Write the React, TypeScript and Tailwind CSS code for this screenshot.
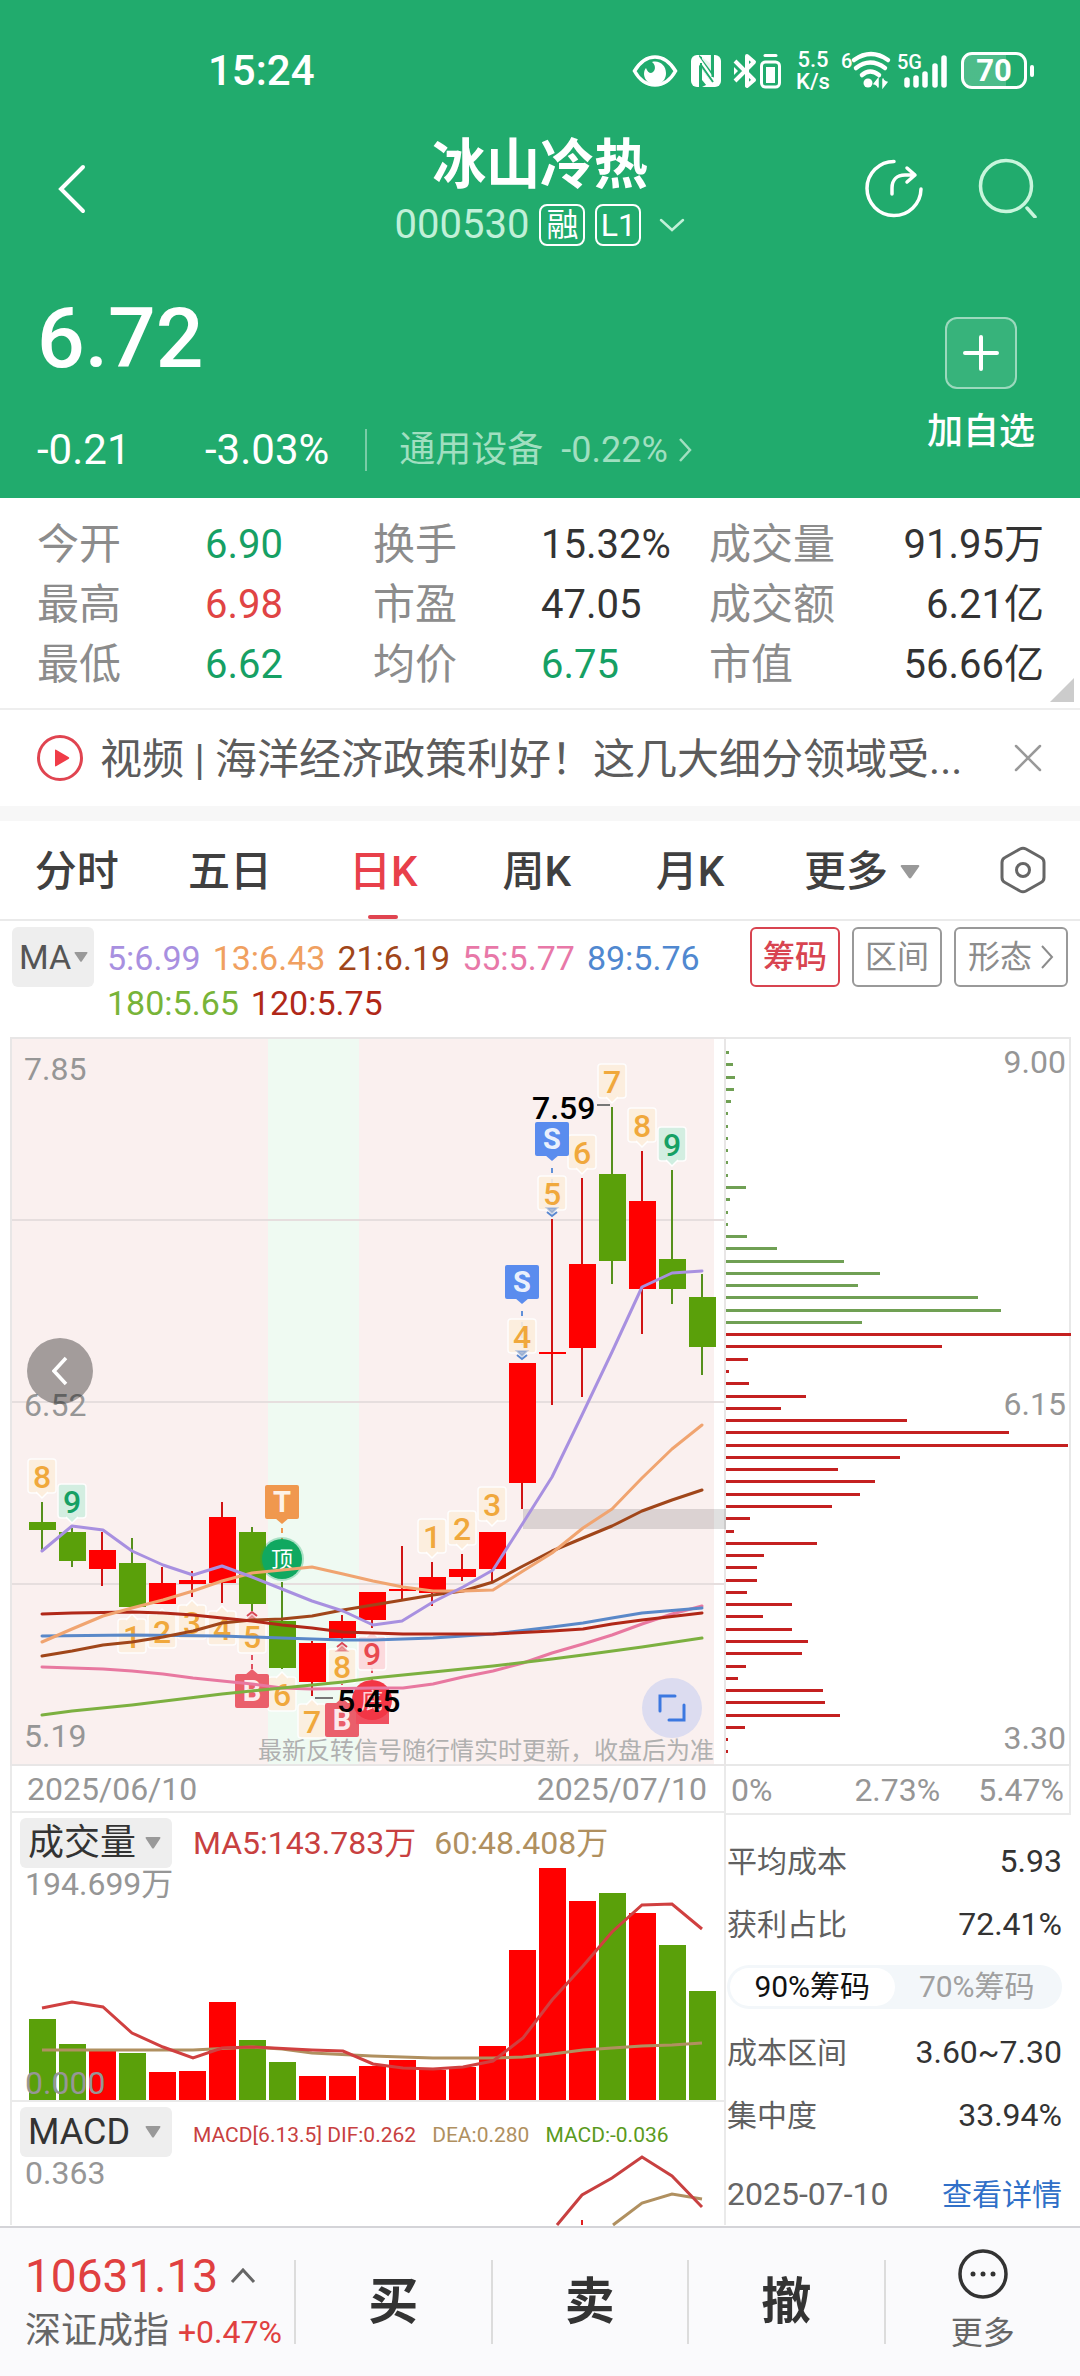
import { useState } from 'react';
import type { ReactNode } from 'react';

const RED = '#ff0000';
const GREEN = '#5aa00a';
const STEP = 30;
const FIRST_X = 42;

const cx = (i: number) => FIRST_X + STEP * i;

type Candle = { up: boolean; high: number; top: number; bottom: number; low: number; vol: number };

// [up, high, body top, body bottom, low, volume bar top]
const rows: [number, number, number, number, number, number][] = [
  [0, 1502, 1522, 1530, 1550, 2019],
  [0, 1528, 1532, 1561, 1567, 2044],
  [1, 1532, 1550, 1569, 1586, 2051],
  [0, 1538, 1563, 1607, 1608, 2053],
  [1, 1567, 1583, 1604, 1604, 2072],
  [1, 1571, 1580, 1584, 1597, 2071],
  [1, 1502, 1517, 1583, 1603, 2002],
  [0, 1527, 1532, 1604, 1611, 2040],
  [0, 1582, 1621, 1668, 1669, 2062],
  [1, 1641, 1643, 1682, 1696, 2076],
  [1, 1615, 1621, 1638, 1639, 2076],
  [1, 1592, 1592, 1620, 1628, 2066],
  [1, 1546, 1589, 1591, 1599, 2060],
  [1, 1562, 1577, 1593, 1606, 2070],
  [1, 1554, 1569, 1577, 1581, 2067],
  [1, 1532, 1532, 1569, 1583, 2046],
  [1, 1363, 1363, 1483, 1509, 1950],
  [1, 1219, 1352, 1354, 1405, 1868],
  [1, 1178, 1264, 1348, 1397, 1901],
  [0, 1107, 1174, 1261, 1284, 1893],
  [1, 1151, 1201, 1289, 1334, 1913],
  [0, 1170, 1259, 1289, 1304, 1945],
  [0, 1274, 1297, 1347, 1375, 1991],
];

const candles: Candle[] = rows.map(([up, high, top, bottom, low, vol]) => ({
  up: up === 1,
  high,
  top,
  bottom,
  low,
  vol,
}));

const maLines = [
  { color: '#e878a0', points: '42,1667 103,1669 132,1671 163,1674 193,1678 222,1681 252,1684 282,1688 312,1689 373,1688 403,1688 433,1684 463,1677 493,1671 523,1663 552,1653 583,1644 612,1635 642,1624 672,1614 702,1606' },
  { color: '#7cb040', points: '42,1715 72,1711 132,1705 222,1694 282,1688 343,1682 373,1678 433,1672 493,1666 552,1659 583,1655 642,1647 702,1638' },
  { color: '#5a88c8', points: '42,1636 132,1635 222,1636 282,1638 343,1640 373,1640 433,1638 493,1634 552,1627 583,1623 612,1618 642,1613 702,1608' },
  { color: '#a0461a', points: '42,1656 72,1651 103,1645 132,1642 163,1637 193,1631 222,1623 252,1620 282,1619 312,1616 343,1610 373,1605 403,1600 433,1595 463,1591 493,1582 523,1566 552,1551 583,1538 612,1526 642,1511 672,1500 702,1490' },
  { color: '#b02818', points: '42,1614 72,1613 132,1612 163,1613 193,1615 222,1618 252,1621 282,1625 312,1628 343,1632 373,1633 403,1634 493,1634 552,1631 583,1629 612,1624 642,1620 702,1613' },
  { color: '#f0a470', points: '42,1642 72,1629 103,1616 132,1608 163,1600 193,1591 222,1581 252,1573 282,1570 312,1567 343,1574 373,1581 403,1587 433,1591 463,1591 493,1590 523,1571 552,1553 583,1528 612,1509 642,1478 672,1449 702,1425' },
  { color: '#a890e0', points: '42,1551 72,1526 103,1530 132,1551 163,1565 193,1575 222,1566 252,1577 282,1589 312,1601 343,1611 373,1625 402,1621 433,1602 463,1587 493,1570 523,1523 552,1477 582,1415 612,1352 642,1287 672,1273 702,1271' },
];

type Tone = 'orange' | 'green' | 'red';
const tags: { i: number; y: number; n: string; down: boolean; tone: Tone }[] = [
  { i: 0, y: 1476, n: '8', down: true, tone: 'orange' },
  { i: 1, y: 1501, n: '9', down: true, tone: 'green' },
  { i: 3, y: 1636, n: '1', down: false, tone: 'orange' },
  { i: 4, y: 1631, n: '2', down: false, tone: 'orange' },
  { i: 5, y: 1622, n: '3', down: false, tone: 'orange' },
  { i: 6, y: 1628, n: '4', down: false, tone: 'orange' },
  { i: 7, y: 1636, n: '5', down: false, tone: 'orange' },
  { i: 8, y: 1694, n: '6', down: false, tone: 'orange' },
  { i: 9, y: 1721, n: '7', down: false, tone: 'orange' },
  { i: 10, y: 1666, n: '8', down: false, tone: 'orange' },
  { i: 11, y: 1653, n: '9', down: false, tone: 'red' },
  { i: 13, y: 1536, n: '1', down: true, tone: 'orange' },
  { i: 14, y: 1528, n: '2', down: true, tone: 'orange' },
  { i: 15, y: 1504, n: '3', down: true, tone: 'orange' },
  { i: 16, y: 1336, n: '4', down: true, tone: 'orange' },
  { i: 17, y: 1193, n: '5', down: true, tone: 'orange' },
  { i: 18, y: 1152, n: '6', down: true, tone: 'orange' },
  { i: 19, y: 1081, n: '7', down: true, tone: 'orange' },
  { i: 20, y: 1125, n: '8', down: true, tone: 'orange' },
  { i: 21, y: 1144, n: '9', down: true, tone: 'green' },
];

const tones = {
  orange: { bg: '#fdeedd', fg: '#f0a83c' },
  green: { bg: '#cfeee0', fg: '#16a064' },
  red: { bg: '#fdd8dc', fg: '#e84850' },
};

const chipBars = [
  3, 7, 9, 8, 5, 2, 2, 2, 2, 2, 2, 20, 4, 2, 2, 21, 51, 118, 154, 132, 252, 275, 136,
  345, 216, 22, 3, 23, 80, 55, 181, 283, 342, 174, 112, 149, 134, 106, 24, 8, 91, 38, 31, 31, 21,
  66, 37, 66, 82, 76, 20, 12, 97, 99, 114, 19, 2, 2,
];
const GREEN_CHIPS = 23;

const stats = [
  ['今开', '6.90', 'text-[#16a064]', '换手', '15.32%', 'text-[#333333]', '成交量', '91.95万'],
  ['最高', '6.98', 'text-[#e04444]', '市盈', '47.05', 'text-[#333333]', '成交额', '6.21亿'],
  ['最低', '6.62', 'text-[#16a064]', '均价', '6.75', 'text-[#16a064]', '市值', '56.66亿'],
];

function Caret({ className }: { className: string }) {
  return (
    <svg viewBox="0 0 16 12" preserveAspectRatio="none" className={className} fill="currentColor" aria-hidden="true">
      <path d="M1.500 0h13q1.500.3.700 1.500L9 11q-1 1.200-2 0L.8 1.500Q0 .3 1.500 0Z" />
    </svg>
  );
}

function StatusBar() {
  return (
    <div className="flex h-[140px] items-center pt-px pr-[46px] pl-[208px] text-white">
      <span className="text-[42px] leading-none font-medium">15:24</span>
      <div className="ml-auto flex items-center">
        <svg viewBox="0 0 46 34" className="h-[34px] w-[46px]" fill="none">
          <path d="M2.500 17C8 8 15 3 23 3s15 5 20.500 14C38 27 31 31 23 31S8 27 2.500 17Z" stroke="white" strokeWidth="3.500" />
          <path d="M20 8c8-2 14 4 14 11a11 11 0 0 1-22 1c0-3 1-5 2-6 1 3 3 5 5 5 4-1 6-7 1-11Z" fill="white" />
        </svg>
        <svg viewBox="0 0 32 34" className="ml-3 h-[34px] w-[32px]" fill="white">
          <path d="M7 1h2v32H7a6 6 0 0 1-6-6V7a6 6 0 0 1 6-6Z" />
          <path d="M9 1h11v8L9 1Z" />
          <path d="M25 1a6 6 0 0 1 6 6v20a6 6 0 0 1-6 6h-1V1Z" />
          <path d="M12 33h12v-6Z" />
          <path d="M8 1l16 23v9L8 9Z" />
          <path d="M12 15l12 17h-7l-5-6Z" />
          <path d="M21 1v16l-9-12V1Z" opacity=".9" />
          <path d="M11 9v20M22.500 3v20M11 11l12 17" stroke="#21ab6d" strokeWidth="2" />
        </svg>
        <svg viewBox="0 0 48 36" className="ml-[11px] h-[36px] w-[48px]" fill="none" stroke="white">
          <path d="M2 8l19 19-7 6V3l7 6L2 28" strokeWidth="4" strokeLinejoin="round" />
          <path d="M1 14l4 4-4 4" fill="white" stroke="none" />
          <rect x="28.500" y="9" width="18" height="25" rx="4" strokeWidth="3" />
          <path d="M32 2.500h11" strokeWidth="3" strokeLinecap="round" />
          <path d="M33 14h9v16h-9Z" fill="white" stroke="none" />
        </svg>
        <div className="ml-[14px] flex w-[36px] flex-col items-center text-[22px] leading-[22px] font-medium">
          <span>5.5</span>
          <span>K/s</span>
        </div>
        <svg viewBox="0 0 52 40" className="ml-[10px] h-[40px] w-[52px] overflow-visible" fill="none" stroke="white" strokeWidth="4.500" strokeLinecap="round">
          <text x="0" y="17" fontSize="20" fontWeight="500" fill="white" stroke="none">6</text>
          <path d="M13 9q17-12 34 0M15 17q14-11 29 0M21 24q8-7 17 0" />
          <circle cx="27" cy="32" r="4.500" fill="white" stroke="none" />
          <path d="M33 33l4-5v8M42 28v8l4-5" fill="white" strokeWidth="1.500" />
        </svg>
        <svg viewBox="0 0 52 40" className="ml-1 h-[40px] w-[52px] overflow-visible" stroke="white" strokeWidth="5.500" strokeLinecap="round">
          <text x="0" y="18" fontSize="20" fontWeight="500" fill="white" stroke="none">5G</text>
          <path d="M10 29v5M19 27v7M28 23v11M38 15v19M47 7v27" />
        </svg>
        <div className="ml-3 flex items-center gap-[3px]">
          <div className="flex h-[37px] w-[66px] items-center justify-center rounded-[11px] border-3 border-white bg-linear-to-r from-white/20 from-70% to-transparent to-70%">
            <span className="text-[31px] leading-none font-bold">70</span>
          </div>
          <div className="h-3 w-1 rounded-full bg-white" />
        </div>
      </div>
    </div>
  );
}

function Header() {
  return (
    <header className="bg-[#21ab6d] text-white">
      <StatusBar />
      <div className="grid h-[117px] grid-cols-[1fr_auto_1fr] items-start">
        <button aria-label="返回" className="mt-[24px] ml-[57px] h-[50px] w-[30px] justify-self-start">
          <svg viewBox="0 0 30 50" className="size-full" fill="none" stroke="white" strokeWidth="4" strokeLinecap="round">
            <path d="M26 3L4 25l22 22" />
          </svg>
        </button>
        <div className="flex flex-col items-center pt-1">
          <h1 className="text-[54px] leading-[44px] font-bold">冰山冷热</h1>
          <button className="mt-[13px] flex items-center text-[40px] leading-[48px] text-[#c0f0d8]">
            <span>000530</span>
            <span className="ml-[10px] flex h-[42px] w-[46px] items-center justify-center rounded-lg border-2 border-white text-[32px] text-white">融</span>
            <span className="ml-[10px] flex h-[42px] w-[46px] items-center justify-center rounded-lg border-2 border-white text-[32px] text-white">L1</span>
            <svg viewBox="0 0 26 14" className="ml-[18px] h-[14px] w-[26px]" fill="none" stroke="currentColor" strokeWidth="2.500" strokeLinecap="round">
              <path d="M2 2l11 10L24 2" />
            </svg>
          </button>
        </div>
        <div className="mt-[18px] mr-[43px] flex gap-[54px] justify-self-end">
          <button aria-label="分享">
            <svg viewBox="0 0 60 60" className="size-[60px]" fill="none" stroke="white" strokeWidth="3.500" strokeLinecap="round" strokeLinejoin="round">
              <path d="M31 3.500A27 27 0 1 0 58 31" />
              <path d="M29 36v-6c0-8 5-13 13-13h9M44 10l8 7-8 7" />
            </svg>
          </button>
          <button aria-label="搜索">
            <svg viewBox="0 0 60 60" className="size-[60px]" fill="none" stroke="#c8f5dc" strokeWidth="3.500" strokeLinecap="round">
              <circle cx="29" cy="28" r="25.500" />
              <path d="M50 50l8 9" />
            </svg>
          </button>
        </div>
      </div>
      <div className="flex h-[241px] justify-between pr-[45px] pl-[37px]">
        <div>
          <p className="pt-[40px] text-[84px] leading-[84px] font-medium">6.72</p>
          <div className="mt-[45px] flex items-center text-[42px] leading-[48px]">
            <span className="w-[168px]">-0.21</span>
            <span>-3.03%</span>
            <span className="ml-[36px] h-[42px] w-0.5 bg-white/40" />
            <a href="#sector" className="ml-[32px] flex items-center text-[36px] text-[#a0dfc0]">
              <span>通用设备</span>
              <span className="ml-[18px]">-0.22%</span>
              <svg viewBox="0 0 14 24" className="ml-[10px] h-6 w-[14px]" fill="none" stroke="currentColor" strokeWidth="2.500">
                <path d="M2 1l10 11L2 23" />
              </svg>
            </a>
          </div>
        </div>
        <button className="flex flex-col items-center pt-[60px]">
          <span className="flex size-[72px] items-center justify-center rounded-xl border-2 border-white/50 bg-white/10">
            <svg viewBox="0 0 36 36" className="size-9" stroke="white" strokeWidth="4" strokeLinecap="round">
              <path d="M18 2v32M2 18h32" />
            </svg>
          </span>
          <span className="mt-[19px] text-[36px] leading-[48px] font-medium">加自选</span>
        </button>
      </div>
    </header>
  );
}

function Stats() {
  return (
    <section className="relative border-b-2 border-[#eeeeee] pt-[17px] pr-[36px] pb-[13px] pl-[37px]">
      <dl className="grid grid-cols-[168fr_168fr_168fr_168fr_140fr_195fr] text-[40px] leading-[60px]">
        {stats.map(([a, av, ac, b, bv, bc, c, cv]) => (
          <div key={a} className="contents">
            <dt className="text-[42px] text-[#8c8c8c]">{a}</dt>
            <dd className={ac}>{av}</dd>
            <dt className="text-[42px] text-[#8c8c8c]">{b}</dt>
            <dd className={bc}>{bv}</dd>
            <dt className="text-[42px] text-[#8c8c8c]">{c}</dt>
            <dd className="text-right whitespace-nowrap text-[#333333]">{cv}</dd>
          </div>
        ))}
      </dl>
      <svg viewBox="0 0 24 24" className="absolute right-[6px] bottom-[6px] size-6" fill="#cccccc">
        <path d="M24 0v24H0Z" />
      </svg>
    </section>
  );
}

function News() {
  return (
    <section className="flex h-[96px] items-center pr-[38px] pl-[36px]">
      <svg viewBox="0 0 48 48" className="size-[48px] shrink-0">
        <circle cx="24" cy="24" r="21.500" fill="none" stroke="#e04450" strokeWidth="3" />
        <path d="M19 16.500q0-1.500 1.500-.5l12 7q1.500 1 0 2l-12 7q-1.500 1-1.500-.5Z" fill="#f03c48" />
      </svg>
      <a href="#news" className="ml-4 min-w-0 truncate pt-1 text-[42px] leading-[60px] text-[#5c5c5c]">
        视频 | 海洋经济政策利好！这几大细分领域受...
      </a>
      <button aria-label="关闭" className="ml-auto">
        <svg viewBox="0 0 28 28" className="size-7" stroke="#999999" strokeWidth="2.500" strokeLinecap="round">
          <path d="M2 2l24 24M26 2L2 26" />
        </svg>
      </button>
    </section>
  );
}

function Tabs() {
  const [active, setActive] = useState('日K');
  return (
    <nav className="flex h-[100px] items-center border-b-2 border-[#eaeaea] pr-[34px] text-[42px] leading-none text-[#404040]">
      <div className="mr-[80px] grid h-full grow grid-cols-6">
        {['分时', '五日', '日K', '周K', '月K'].map((t) => (
          <button
            key={t}
            onClick={() => setActive(t)}
            className={t === active ? 'relative pt-1 font-medium text-[#e8404a]' : 'relative pt-1 font-medium'}
          >
            {t}
            {t === active && <span className="absolute bottom-0 left-1/2 h-1 w-[30px] -translate-x-1/2 rounded-full bg-[#e04450]" />}
          </button>
        ))}
        <button className="flex items-center justify-end pt-1 font-medium">
          更多
          <Caret className="ml-3 h-[14px] w-5 text-[#999999]" />
        </button>
      </div>
      <button aria-label="设置">
        <svg viewBox="0 0 46 48" className="h-[48px] w-[46px]" fill="none" stroke="#666666" strokeWidth="3">
          <path d="M20 3q3-1.500 6 0l15 8.500q3 1.500 3 5v15q0 3.500-3 5L26 45q-3 1.500-6 0L5 36.500q-3-1.500-3-5v-15q0-3.500 3-5Z" />
          <circle cx="23" cy="24" r="6.500" />
        </svg>
      </button>
    </nav>
  );
}

function MaBar() {
  return (
    <section className="flex h-[116px] items-start justify-between pt-[6px] pr-3 pl-3">
      <div className="flex">
        <label className="relative flex h-[60px] w-[82px] shrink-0 items-center rounded-md bg-[#eeeeee] text-[#555555]">
          <select aria-label="主图指标" className="w-full appearance-none pl-[7px] text-[34px] leading-[44px]">
            <option>MA</option>
          </select>
          <Caret className="pointer-events-none absolute right-[6px] h-[10px] w-[14px] text-[#999999]" />
        </label>
        <div className="ml-[13px] flex w-[610px] flex-wrap gap-x-3 pt-[9px] text-[34px] leading-[45px]">
          <span className="text-[#a890e0]">5:6.99</span>
          <span className="text-[#f0a060]">13:6.43</span>
          <span className="text-[#a0461a]">21:6.19</span>
          <span className="text-[#e878a8]">55:5.77</span>
          <span className="text-[#5088d0]">89:5.76</span>
          <span className="text-[#78b438]">180:5.65</span>
          <span className="text-[#b02818]">120:5.75</span>
        </div>
      </div>
      <div className="flex shrink-0 gap-3 text-[32px] text-[#8c8c8c]">
        <button className="h-[60px] w-[90px] rounded-md border-2 border-[#d84450] font-medium text-[#d84450]">筹码</button>
        <button className="h-[60px] w-[90px] rounded-md border-2 border-[#999999]">区间</button>
        <button className="flex h-[60px] w-[114px] items-center justify-center gap-2 rounded-md border-2 border-[#999999]">
          形态
          <svg viewBox="0 0 14 24" className="h-6 w-[14px]" fill="none" stroke="currentColor" strokeWidth="2">
            <path d="M2 1l10 11L2 23" />
          </svg>
        </button>
      </div>
    </section>
  );
}

function CountTag({ x, y, n, down, tone }: { x: number; y: number; n: string; down: boolean; tone: Tone }) {
  const { bg, fg } = tones[tone];
  const tail = down ? `M${x - 6} ${y + 16}l6 6 6-6` : `M${x - 6} ${y - 16}l6-6 6 6`;
  return (
    <g>
      <rect x={x - 14} y={y - 17} width="28" height="34" rx="3" fill={bg} stroke="white" strokeWidth="1.500" opacity=".9" />
      <path d={tail} fill={bg} stroke="white" strokeWidth="1.500" />
      <text x={x} y={y + 12} textAnchor="middle" fontSize="32" fontWeight="500" fill={fg}>{n}</text>
    </g>
  );
}

function SignalTag({ x, y, letter, color, down }: { x: number; y: number; letter: string; color: string; down: boolean }) {
  const tail = down ? `M${x - 7} ${y + 16}l7 6 7-6Z` : `M${x - 7} ${y - 16}l7-6 7 6Z`;
  return (
    <g>
      <rect x={x - 17} y={y - 17} width="34" height="34" rx="2" fill={color} />
      <path d={tail} fill={color} />
      <text x={x} y={y + 10} textAnchor="middle" fontSize="29" fontWeight="700" fill="#ffffff" fillOpacity=".9">{letter}</text>
    </g>
  );
}

function PointMark({ x, y, color, down }: { x: number; y: number; color: string; down: boolean }) {
  const d = down ? 1 : -1;
  return (
    <g stroke={color} fill="none" strokeWidth="2">
      <path d={`M${x - 5} ${y - d}l5 ${5 * d} 5 ${-5 * d}Z`} fill={color} fillOpacity=".5" strokeOpacity=".3" />
      <path d={`M${x - 5} ${y + 3 * d}l5 ${4 * d} 5 ${-4 * d}`} />
    </g>
  );
}

function KLine() {
  return (
    <div className="relative">
      <svg viewBox="10 1037 716 729" className="block h-auto w-full">
        <rect x="10" y="1037" width="704" height="729" fill="#faf0ef" />
        <rect x="268" y="1037" width="91" height="729" fill="#effaf2" />
        <path d="M10 1220H726M10 1402H726M10 1584H726" stroke="#e6dede" strokeWidth="2" />
        <path d="M10 1038H726M11 1037V1766M10 1765H726M725 1037V1766" stroke="#e8e6e6" strokeWidth="2" />
        <rect x="523" y="1509" width="203" height="20" fill="#000000" fillOpacity=".12" />
        <g fontSize="32" fill="#969696">
          <text x="24" y="1080">7.85</text>
          <text x="24" y="1416">6.52</text>
          <text x="24" y="1747">5.19</text>
        </g>
        <text x="258" y="1759" fontSize="24" fill="#b0b0b0">最新反转信号随行情实时更新，收盘后为准</text>
        {candles.map((c, i) => (
          <g key={i} fill={c.up ? RED : GREEN}>
            <rect x={cx(i) - 1} y={c.high} width="2" height={c.low - c.high} fill={c.up ? '#d01414' : '#56901c'} />
            <rect x={cx(i) - 13} y={c.top} width="27" height={c.bottom - c.top} />
          </g>
        ))}
        <path d="M522 1311V1345M552 1168V1205" stroke="#6090d8" strokeWidth="2" strokeDasharray="5 6" />
        <path d="M282 1528V1540" stroke="#f09850" strokeWidth="2" strokeDasharray="5 5" />
        <path d="M252 1655V1670M342 1680V1700M372 1668V1680" stroke="#e05060" strokeWidth="2" strokeDasharray="5 4" />
        {tags.map((t, k) => (
          <CountTag key={k} x={cx(t.i)} y={t.y} n={t.n} down={t.down} tone={t.tone} />
        ))}
        <PointMark x={522} y={1352} color="#5a88d0" down />
        <PointMark x={552} y={1209} color="#5a88d0" down />
        <PointMark x={252} y={1619} color="#d84858" down={false} />
        <PointMark x={342} y={1650} color="#d84858" down={false} />
        <SignalTag x={522} y={1282} letter="S" color="#5a8cee" down />
        <SignalTag x={552} y={1139} letter="S" color="#5a8cee" down />
        <SignalTag x={282} y={1502} letter="T" color="#f0984e" down />
        <SignalTag x={252} y={1691} letter="B" color="#ea5f6b" down={false} />
        <SignalTag x={342} y={1720} letter="B" color="#ea5f6b" down={false} />
        <circle cx="282" cy="1559" r="22" fill="#10a860" fillOpacity=".3" />
        <circle cx="282" cy="1559" r="20" fill="#10a860" />
        <text x="282" y="1567" textAnchor="middle" fontSize="22" fill="#ffffff">顶</text>
        <rect x="356" y="1696" width="33" height="28" fill="#f05060" />
        <circle cx="372" cy="1700" r="20" fill="#f23645" />
        <text x="372" y="1708" textAnchor="middle" fontSize="22" fill="#ffffff" fillOpacity=".8">底</text>
        {maLines.map((l) => (
          <polyline key={l.color} points={l.points} fill="none" stroke={l.color} strokeWidth="3" strokeLinejoin="round" strokeLinecap="round" />
        ))}
        <path d="M597 1105h13M315 1698h18" stroke="#777777" strokeWidth="2" />
        <g fontSize="32" fontWeight="500" fill="#000000">
          <text x="532" y="1119">7.59</text>
          <text x="337" y="1712">5.45</text>
        </g>
      </svg>
      <button aria-label="向左" className="absolute top-[301px] left-[17px] flex size-[66px] items-center justify-center rounded-full bg-black/35">
        <svg viewBox="0 0 16 30" className="h-[30px] w-4" fill="none" stroke="white" strokeWidth="3.500">
          <path d="M14 2L2 15l12 13" />
        </svg>
      </button>
      <button aria-label="全屏" className="absolute right-[24px] bottom-[28px] flex size-[60px] items-center justify-center rounded-full bg-[#dcdcf0]">
        <svg viewBox="0 0 28 28" className="size-7" fill="none" stroke="#3c78e0" strokeWidth="3" strokeLinecap="round">
          <path d="M17 2H2v15M11 26h15V11" />
        </svg>
      </button>
    </div>
  );
}

function PanelHead({ name, options, children }: { name: string; options: string[]; children: ReactNode }) {
  return (
    <div className="flex h-[55px] items-end pl-2">
      <label className="relative flex h-[50px] w-[152px] shrink-0 items-center rounded-md bg-[#eeeeee] text-[#333333]">
        <select aria-label={name} className="w-full appearance-none pl-2 text-[36px] leading-[46px]">
          {options.map((o) => (
            <option key={o}>{o}</option>
          ))}
        </select>
        <Caret className="pointer-events-none absolute right-[11px] h-3 w-4 text-[#999999]" />
      </label>
      {children}
    </div>
  );
}

function Volume() {
  return (
    <div className="border-b-2 border-l-2 border-[#eaeaea]">
      <PanelHead name="副图一" options={['成交量']}>
        <div className="flex gap-[18px] pl-[21px] text-[32px] leading-[50px] whitespace-nowrap">
          <span className="text-[#c84040]">MA5:143.783万</span>
          <span className="text-[#b09060]">60:48.408万</span>
        </div>
      </PanelHead>
      <svg viewBox="12 1868 714 232" className="block h-auto w-full overflow-visible">
        {candles.map((c, i) => (
          <rect key={i} x={cx(i) - 13} y={c.vol} width="27" height={2100 - c.vol} fill={c.up ? RED : GREEN} />
        ))}
        <polyline points="42,2050 193,2050 252,2047 282,2049 312,2053 372,2056 433,2058 493,2058 523,2057 552,2054 583,2050 612,2048 642,2046 672,2045 702,2043" fill="none" stroke="#b09060" strokeWidth="3" />
        <polyline points="42,2008 72,2002 103,2007 132,2033 163,2047 193,2058 222,2048 252,2047 312,2050 343,2051 373,2064 403,2068 433,2069 463,2067 493,2061 523,2038 552,2000 583,1966 612,1932 642,1905 672,1904 702,1929" fill="none" stroke="#d04040" strokeWidth="3" />
        <g fontSize="32" fill="#969696">
          <text x="25" y="1895">194.699万</text>
          <text x="25" y="2094">0.000</text>
        </g>
        <path d="M725 1813V2100" stroke="#eaeaea" strokeWidth="2" />
      </svg>
    </div>
  );
}

function Macd() {
  return (
    <div className="border-l-2 border-[#eaeaea]">
      <PanelHead name="副图二" options={['MACD']}>
        <div className="flex gap-4 pl-[21px] text-[21px] leading-[44px] whitespace-nowrap">
          <span className="text-[#c84040]">MACD[6.13.5] DIF:0.262</span>
          <span className="text-[#b09060]">DEA:0.280</span>
          <span className="text-[#5a9a20]">MACD:-0.036</span>
        </div>
      </PanelHead>
      <svg viewBox="12 2157 714 68" className="block h-auto w-full overflow-visible">
        <text x="25" y="2184" fontSize="32" fill="#969696">0.363</text>
        <path d="M582 2220v5" stroke="#e02020" strokeWidth="2" />
        <polyline points="613,2225 642,2203 672,2194 702,2199" fill="none" stroke="#b09060" strokeWidth="3" />
        <polyline points="557,2225 582,2195 612,2178 642,2157 672,2176 702,2207" fill="none" stroke="#c84040" strokeWidth="3" />
        <path d="M725 2102V2225" stroke="#eaeaea" strokeWidth="2" />
      </svg>
    </div>
  );
}

function Chips() {
  return (
    <svg viewBox="726 1037 345 729" className="block h-auto w-full">
      <path d="M726 1038H1071M726 1765H1071M1070 1037V1766" stroke="#e8e8e8" strokeWidth="2" />
      {chipBars.map((w, i) => (
        <rect key={i} x="726" y={Math.round(1051 + i * 12.27)} width={w} height="3" fill={i < GREEN_CHIPS ? '#70a054' : '#c42020'} />
      ))}
      <g fontSize="32" fill="#969696" textAnchor="end">
        <text x="1066" y="1073">9.00</text>
        <text x="1066" y="1415">6.15</text>
        <text x="1066" y="1749">3.30</text>
      </g>
    </svg>
  );
}

function Row({ label, value }: { label: string; value: string }) {
  return (
    <div className="flex items-center justify-between">
      <dt className="text-[30px] text-[#606060]">{label}</dt>
      <dd className="text-[#333333]">{value}</dd>
    </div>
  );
}

function ChipInfo() {
  const [range, setRange] = useState('90%筹码');
  return (
    <div className="pt-[15px] pr-[9px] pl-px text-[32px] leading-[63px]">
      <dl>
        <Row label="平均成本" value="5.93" />
        <Row label="获利占比" value="72.41%" />
      </dl>
      <div className="mt-[9px] mb-[12px] flex h-[44px] rounded-full bg-[#f3f7fa] p-[3px] text-[30px] leading-none">
        {['90%筹码', '70%筹码'].map((r) => (
          <button
            key={r}
            onClick={() => setRange(r)}
            className={r === range ? 'flex-1 rounded-full bg-white text-[#111111]' : 'flex-1 rounded-full text-[#a0a0a0]'}
          >
            {r}
          </button>
        ))}
      </div>
      <dl>
        <Row label="成本区间" value="3.60~7.30" />
        <Row label="集中度" value="33.94%" />
      </dl>
      <div className="mt-4 flex items-center justify-between text-[#666666]">
        <span>2025-07-10</span>
        <a href="#detail" className="text-[30px] text-[#3070c8]">查看详情</a>
      </div>
    </div>
  );
}

function Charts() {
  return (
    <main className="grid grow grid-cols-[716fr_345fr] content-start pr-[9px] pl-[10px]">
      <div>
        <KLine />
        <div className="flex h-[47px] items-center justify-between border-x-2 border-b-2 border-[#eaeaea] pr-[17px] pl-[15px] text-[32px] text-[#969696]">
          <span>2025/06/10</span>
          <span>2025/07/10</span>
        </div>
        <Volume />
        <Macd />
      </div>
      <div>
        <Chips />
        <div className="flex h-[49px] items-center justify-between border-r-2 border-b-2 border-[#eaeaea] pr-[5px] pl-[5px] text-[32px] text-[#969696]">
          <span>0%</span>
          <span className="ml-[44px]">2.73%</span>
          <span>5.47%</span>
        </div>
        <ChipInfo />
      </div>
    </main>
  );
}

function Footer() {
  return (
    <footer className="flex h-[151px] border-t-2 border-[#d4d4d8] bg-[#fafafc] pt-[32px] text-[#333333]">
      <div className="-mt-[10px] w-[294px] shrink-0 pl-[25px] whitespace-nowrap">
        <button className="flex items-center text-[46px] leading-[52px] text-[#e04040]">
          10631.13
          <svg viewBox="0 0 26 16" className="ml-[12px] h-4 w-[26px]" fill="none" stroke="#666666" strokeWidth="3">
            <path d="M2 14L13 2l11 12" />
          </svg>
        </button>
        <p className="mt-[3px] text-[36px] leading-[52px] text-[#666666]">
          深证成指 <span className="text-[32px] text-[#e04040]">+0.47%</span>
        </p>
      </div>
      {['买', '卖', '撤'].map((t) => (
        <button key={t} className="h-[84px] flex-1 border-l-2 border-[#dcdcdc] text-[50px] leading-none font-bold">
          {t}
        </button>
      ))}
      <div className="flex h-[84px] flex-1 items-center justify-center border-l-2 border-[#dcdcdc]">
        <button className="flex flex-col items-center">
          <svg viewBox="0 0 50 50" className="size-[50px] shrink-0" fill="#333333">
            <circle cx="25" cy="25" r="23" fill="none" stroke="#333333" strokeWidth="3.500" />
            <circle cx="15" cy="25" r="2.500" />
            <circle cx="25" cy="25" r="2.500" />
            <circle cx="35" cy="25" r="2.500" />
          </svg>
          <span className="mt-3 text-[32px] leading-[44px] text-[#666666]">更多</span>
        </button>
      </div>
    </footer>
  );
}

export default function App() {
  return (
    <div className="flex min-h-screen flex-col bg-white font-['Roboto','Noto_Sans_CJK_SC',sans-serif]">
      <Header />
      <Stats />
      <News />
      <div className="h-[15px] bg-[#f7f7f7]" />
      <Tabs />
      <MaBar />
      <Charts />
      <Footer />
    </div>
  );
}
